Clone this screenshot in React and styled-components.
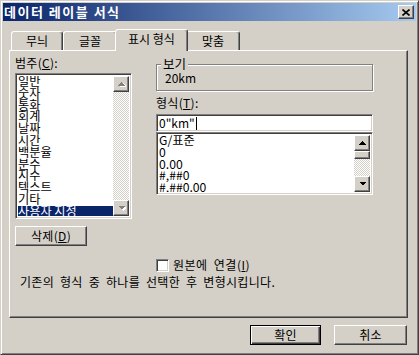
import React from "react";
import styled, { createGlobalStyle } from "styled-components";

const FONT = `"Noto Sans CJK KR", "Noto Sans", sans-serif`;

const GlobalStyle = createGlobalStyle`
  html, body { margin: 0; padding: 0; background: #D4D0C8; }
  body { font-family: ${FONT}; font-size: 12px; color: #000; }
  *, *::before, *::after { box-sizing: border-box; }
`;

const Window = styled.div`
  width: 419px;
  height: 355px;
  background: #d4d0c8;
  border: 1px solid;
  border-color: #d4d0c8 #404040 #404040 #d4d0c8;
  box-shadow: inset 1px 1px #fff, inset -1px -1px #808080;
  padding: 2px;
  display: flex;
  flex-direction: column;
`;

const TitleBar = styled.div`
  height: 18px;
  flex: 0 0 18px;
  background: linear-gradient(to right, #0a246a, #a6caf0);
  display: flex;
  align-items: center;
  justify-content: space-between;
  padding: 0 2px 0 1px;
`;

const TitleText = styled.span`
  color: #fff;
  font-weight: bold;
  font-size: 13px;
  letter-spacing: 1.5px;
  line-height: 18px;
`;

const raised = `
  border: 1px solid;
  border-color: #fff #404040 #404040 #fff;
  box-shadow: inset -1px -1px #808080;
  background: #d4d0c8;
`;

const sunken = `
  border: 1px solid;
  border-color: #808080 #fff #fff #808080;
  box-shadow: inset 1px 1px #404040, inset -1px -1px #d4d0c8;
  background: #fff;
`;

const CloseButton = styled.div`
  ${raised}
  width: 16px;
  height: 14px;
  display: flex;
  align-items: center;
  justify-content: center;
`;

const Body = styled.div`
  flex: 1;
  display: flex;
  flex-direction: column;
  padding: 0 8px 0 6px;
`;

const TabRow = styled.div`
  display: flex;
  align-items: flex-end;
  height: 21px;
  margin-top: 8px;
  padding-left: 2px;
  position: relative;
  z-index: 1;
`;

const Tab = styled.div`
  position: relative;
  width: ${(p) => p.$w}px;
  height: ${(p) => (p.$active ? 22 : 19)}px;
  margin: ${(p) => (p.$active ? "0 -2px -1px -2px" : "0")};
  z-index: ${(p) => (p.$active ? 2 : 1)};
  background: #d4d0c8;
  border: 1px solid;
  border-bottom: none;
  border-color: #fff #404040 transparent #fff;
  border-radius: 3px 3px 0 0;
  box-shadow: inset -1px 0 #808080;
  display: flex;
  align-items: center;
  justify-content: center;
  padding-bottom: ${(p) => (p.$active ? 4 : 0)}px;
  line-height: 14px;
  white-space: nowrap;
`;

const Panel = styled.div`
  flex: 0 0 268px;
  border: 1px solid;
  border-color: #fff #404040 #404040 #fff;
  box-shadow: inset -1px -1px #808080;
  padding: 5px 0 0 5px;
  display: flex;
  flex-direction: column;
`;

const TopSection = styled.div`
  display: flex;
  gap: 24px;
  align-items: flex-start;
  height: 190px;
`;

const LeftCol = styled.div`
  width: 117px;
  display: flex;
  flex-direction: column;
`;

const RightCol = styled.div`
  width: 217px;
  display: flex;
  flex-direction: column;
`;

const Label = styled.div`
  line-height: 14px;
  height: 14px;
  margin-top: ${(p) => p.$mt || 0}px;
  margin-bottom: ${(p) => p.$mb || 0}px;
  white-space: nowrap;
  letter-spacing: 0.3px;
`;

const ListBox = styled.div`
  ${sunken}
  height: ${(p) => p.$h}px;
  padding: 2px;
  display: flex;
  overflow: hidden;
`;

const Items = styled.div`
  flex: 1;
  overflow: hidden;
  display: flex;
  flex-direction: column;
`;

const Item = styled.div`
  line-height: 11.8px;
  height: 11.8px;
  flex: 0 0 11.8px;
  white-space: nowrap;
  background: ${(p) => (p.$sel ? "#0a246a" : "transparent")};
  color: ${(p) => (p.$sel ? "#fff" : "#000")};
  font-size: 12.2px;
`;

const ScrollBar = styled.div`
  width: 16px;
  display: flex;
  flex-direction: column;
`;

const ArrowBtn = styled.div`
  ${raised}
  flex: 0 0 16px;
  height: 16px;
  display: flex;
  align-items: center;
  justify-content: center;
`;

const Thumb = styled.div`
  ${raised}
  flex: 0 0 8px;
`;

const Track = styled.div`
  flex: 1;
  background-color: #fff;
  background-image: conic-gradient(#d4d0c8 25%, #fff 0 50%, #d4d0c8 0 75%, #fff 0);
  background-size: 2px 2px;
`;

const Button = styled.div`
  ${raised}
  width: ${(p) => p.$w}px;
  height: 20px;
  display: flex;
  align-items: center;
  justify-content: center;
  line-height: 14px;
  margin-top: ${(p) => p.$mt || 0}px;
  white-space: nowrap;
  letter-spacing: 0.3px;
`;

const DefaultButton = styled(Button)`
  border: 1px solid #000;
  box-shadow: inset 1px 1px #fff, inset -1px -1px #404040, inset -2px -2px #808080;
`;

const GroupBox = styled.div`
  position: relative;
  margin-top: 8px;
  height: 27px;
  border: 1px solid #808080;
  box-shadow: inset 1px 1px #fff, 1px 1px #fff;
  padding: 6px 0 0 8px;
  line-height: 14px;
`;

const Legend = styled.span`
  position: absolute;
  top: -8px;
  left: 4px;
  padding: 0 2px;
  background: #d4d0c8;
  line-height: 14px;
  font-size: 12.5px;
`;

const TextInput = styled.div`
  ${sunken}
  height: 18px;
  margin-top: 4px;
  padding: 0 2px;
  display: flex;
  align-items: center;
  line-height: 14px;
`;

const Caret = styled.span`
  display: inline-block;
  width: 1px;
  height: 13px;
  background: #000;
  margin-left: 1px;
`;

const CheckRow = styled.div`
  display: flex;
  align-items: center;
  gap: 4px;
  margin-top: 12px;
  padding-left: 141px;
  line-height: 14px;
  word-spacing: 3px;
  letter-spacing: 0.5px;
`;

const CheckBox = styled.div`
  ${sunken}
  width: 13px;
  height: 13px;
`;

const Description = styled.div`
  margin-top: 3px;
  padding-left: 5px;
  line-height: 14px;
  word-spacing: 3px;
  letter-spacing: 0.3px;
`;

const ButtonRow = styled.div`
  display: flex;
  justify-content: flex-end;
  gap: 13px;
  margin-top: 7px;
  padding-right: 1px;
`;

const Arrow = ({ down, disabled }) => (
  <svg width="9" height="6" viewBox="0 0 9 6" shapeRendering="crispEdges">
    {disabled && (
      <polygon
        points={down ? "1,1 9,1 5,5" : "1,5 9,5 5,1"}
        fill="#fff"
        transform="translate(1 1)"
      />
    )}
    <polygon
      points={down ? "1,1 8,1 4.5,4.5" : "1,4.5 8,4.5 4.5,1"}
      fill={disabled ? "#808080" : "#000"}
    />
  </svg>
);

const CloseIcon = () => (
  <svg width="8" height="7" viewBox="0 0 8 7">
    <path d="M0.5 0.5 L7.5 6.5 M7.5 0.5 L0.5 6.5" stroke="#000" strokeWidth="1.6" />
  </svg>
);

const categories = [
  "일반",
  "숫자",
  "통화",
  "회계",
  "날짜",
  "시간",
  "백분율",
  "분수",
  "지수",
  "텍스트",
  "기타",
  "사용자 지정",
];

const formats = ["G/표준", "0", "0.00", "#,##0", "#,##0.00"];

export default function App() {
  return (
    <>
      <GlobalStyle />
      <Window>
        <TitleBar>
          <TitleText>데이터 레이블 서식</TitleText>
          <CloseButton>
            <CloseIcon />
          </CloseButton>
        </TitleBar>
        <Body>
          <TabRow>
            <Tab $w={52}>무늬</Tab>
            <Tab $w={54}>글꼴</Tab>
            <Tab $w={73} $active>
              표시 형식
            </Tab>
            <Tab $w={54}>맞춤</Tab>
          </TabRow>
          <Panel>
            <TopSection>
              <LeftCol>
                <Label $mb={3}>
                  범주(<u>C</u>):
                </Label>
                <ListBox $h={146}>
                  <Items>
                    {categories.map((c, i) => (
                      <Item key={c} $sel={i === categories.length - 1}>
                        {c}
                      </Item>
                    ))}
                  </Items>
                  <ScrollBar>
                    <ArrowBtn>
                      <Arrow disabled />
                    </ArrowBtn>
                    <Track />
                    <ArrowBtn>
                      <Arrow down disabled />
                    </ArrowBtn>
                  </ScrollBar>
                </ListBox>
                <Button $w={72} $mt={7}>
                  삭제(<u>D</u>)
                </Button>
              </LeftCol>
              <RightCol>
                <GroupBox>
                  <Legend>보기</Legend>
                  20km
                </GroupBox>
                <Label $mt={5}>
                  형식(<u>T</u>):
                </Label>
                <TextInput>
                  0"km"
                  <Caret />
                </TextInput>
                <ListBox $h={63}>
                  <Items>
                    {formats.map((f) => (
                      <Item key={f}>{f}</Item>
                    ))}
                  </Items>
                  <ScrollBar>
                    <ArrowBtn>
                      <Arrow />
                    </ArrowBtn>
                    <Thumb />
                    <Track />
                    <ArrowBtn>
                      <Arrow down />
                    </ArrowBtn>
                  </ScrollBar>
                </ListBox>
              </RightCol>
            </TopSection>
            <CheckRow>
              <CheckBox />
              <span>
                원본에 연결(<u>I</u>)
              </span>
            </CheckRow>
            <Description>기존의 형식 중 하나를 선택한 후 변형시킵니다.</Description>
          </Panel>
          <ButtonRow>
            <DefaultButton $w={71}>확인</DefaultButton>
            <Button $w={73}>취소</Button>
          </ButtonRow>
        </Body>
      </Window>
    </>
  );
}
